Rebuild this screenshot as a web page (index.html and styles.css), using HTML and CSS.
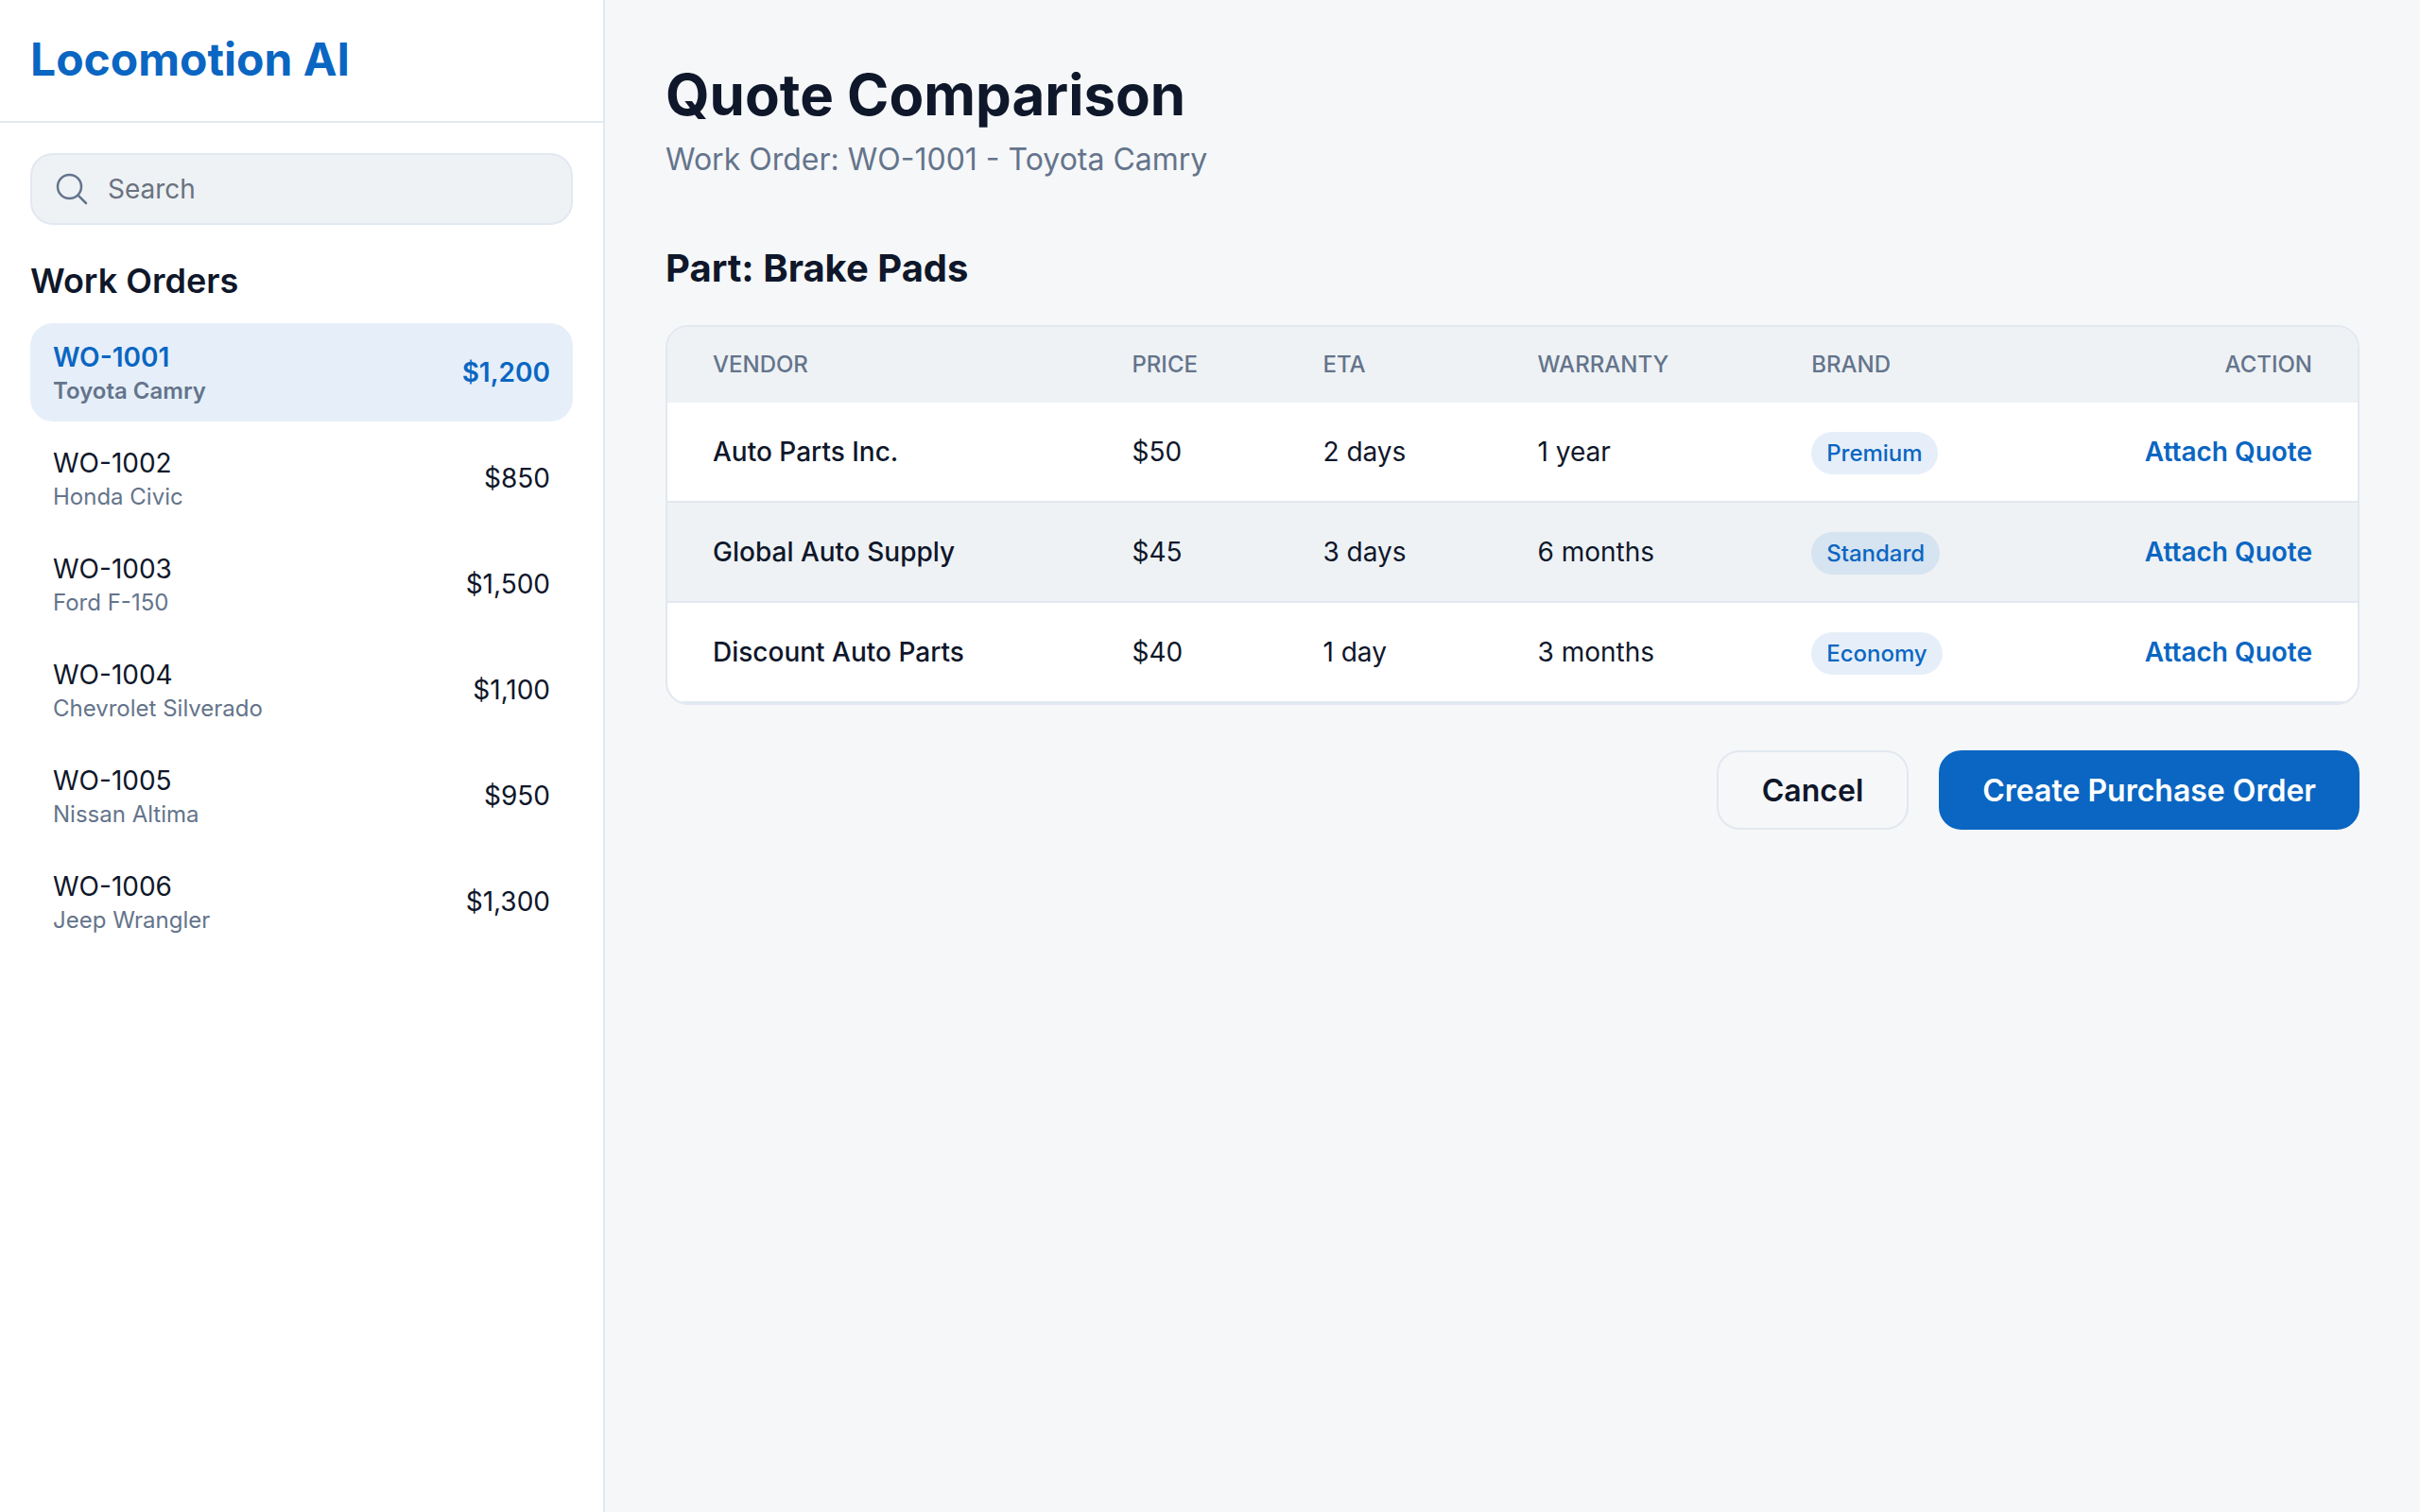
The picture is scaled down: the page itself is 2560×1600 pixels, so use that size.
FILE: index.html
```html
<!DOCTYPE html>
<html lang="en">
<head>
<meta charset="utf-8">
<meta name="viewport" content="width=device-width, initial-scale=1">
<title>Locomotion AI - Quote Comparison</title>
<link rel="stylesheet" href="styles.css">
</head>
<body>
<div class="app">
  <aside class="sidebar">
    <header class="brand"><span class="brand-name">Locomotion AI</span></header>
    <div class="sidebar-body">
      <label class="search">
        <svg class="search-icon" viewBox="0 0 24 24" fill="none" stroke="currentColor" stroke-width="1.5" stroke-linecap="round" stroke-linejoin="round" aria-hidden="true"><path d="M21 21l-5.197-5.197m0 0A7.5 7.5 0 1 0 5.196 5.196a7.5 7.5 0 0 0 10.607 10.607Z"/></svg>
        <input class="search-input" type="search" placeholder="Search" aria-label="Search">
      </label>
      <h2 class="list-title">Work Orders</h2>
      <nav class="orders" aria-label="Work Orders">
        <a class="order order-active" href="#wo-1001" aria-current="page"><span class="order-info"><span class="order-id">WO-1001</span><span class="order-car">Toyota Camry</span></span><span class="order-total">$1,200</span></a>
        <a class="order" href="#wo-1002"><span class="order-info"><span class="order-id">WO-1002</span><span class="order-car">Honda Civic</span></span><span class="order-total">$850</span></a>
        <a class="order" href="#wo-1003"><span class="order-info"><span class="order-id">WO-1003</span><span class="order-car">Ford F-150</span></span><span class="order-total">$1,500</span></a>
        <a class="order" href="#wo-1004"><span class="order-info"><span class="order-id">WO-1004</span><span class="order-car">Chevrolet Silverado</span></span><span class="order-total">$1,100</span></a>
        <a class="order" href="#wo-1005"><span class="order-info"><span class="order-id">WO-1005</span><span class="order-car">Nissan Altima</span></span><span class="order-total">$950</span></a>
        <a class="order" href="#wo-1006"><span class="order-info"><span class="order-id">WO-1006</span><span class="order-car">Jeep Wrangler</span></span><span class="order-total">$1,300</span></a>
      </nav>
    </div>
  </aside>
  <main class="main">
    <header class="page-header">
      <h1 class="page-title">Quote Comparison</h1>
      <p class="page-subtitle">Work Order: WO-1001 - Toyota Camry</p>
    </header>
    <section class="quotes">
      <h2 class="part-title">Part: Brake Pads</h2>
      <div class="table-card">
        <table class="quote-table">
          <colgroup><col class="col-vendor"><col class="col-price"><col class="col-eta"><col class="col-warranty"><col><col></colgroup>
          <thead>
            <tr><th scope="col">VENDOR</th><th scope="col">PRICE</th><th scope="col">ETA</th><th scope="col">WARRANTY</th><th scope="col">BRAND</th><th scope="col" class="action">ACTION</th></tr>
          </thead>
          <tbody>
            <tr><td class="vendor">Auto Parts Inc.</td><td>$50</td><td>2 days</td><td>1 year</td><td><span class="badge">Premium</span></td><td class="action"><button class="attach" type="button">Attach Quote</button></td></tr>
            <tr><td class="vendor">Global Auto Supply</td><td>$45</td><td>3 days</td><td>6 months</td><td><span class="badge">Standard</span></td><td class="action"><button class="attach" type="button">Attach Quote</button></td></tr>
            <tr><td class="vendor">Discount Auto Parts</td><td>$40</td><td>1 day</td><td>3 months</td><td><span class="badge">Economy</span></td><td class="action"><button class="attach" type="button">Attach Quote</button></td></tr>
          </tbody>
        </table>
      </div>
      <div class="actions">
        <button class="button button-secondary" type="button">Cancel</button>
        <button class="button button-primary" type="button">Create Purchase Order</button>
      </div>
    </section>
  </main>
</div>
</body>
</html>
```

FILE: styles.css
```css
:root {
  --primary: #0a66c2;
  --primary-soft: rgba(10, 102, 194, 0.1);
  --page: #f6f7f9;
  --surface: #ffffff;
  --surface-muted: #eef2f5;
  --border: #e2e8f0;
  --text: #0f172a;
  --text-muted: #64748b;
}

*, *::before, *::after {
  box-sizing: border-box;
}

body {
  margin: 0;
  background: var(--page);
  color: var(--text);
  font-family: Inter, "Liberation Sans", sans-serif;
  font-size: 28px;
  line-height: 40px;
}

h1, h2, p {
  margin: 0;
}

button, input {
  font: inherit;
  color: inherit;
}

.app {
  display: flex;
  min-height: 100vh;
}

/* Sidebar */
.sidebar {
  flex: 0 0 25%;
  background: var(--surface);
  border-right: 2px solid var(--border);
}

.brand {
  padding: 31px 32px 33px;
  border-bottom: 2px solid var(--border);
}

.brand-name {
  display: block;
  color: var(--primary);
  font-size: 48px;
  font-weight: 700;
  line-height: 64px;
}

.sidebar-body {
  padding: 32px;
}

.search {
  display: flex;
  align-items: center;
  gap: 18px;
  padding: 16px 22px;
  background: var(--surface-muted);
  border: 2px solid var(--border);
  border-radius: 24px;
}

.search-icon {
  flex: none;
  width: 40px;
  height: 40px;
  color: var(--text-muted);
}

.search-input {
  flex: 1;
  min-width: 0;
  height: 40px;
  padding: 0;
  border: 0;
  outline: 0;
  background: transparent;
  appearance: none;
}

.search-input::placeholder {
  color: #6b7280;
}

.list-title {
  margin: 31px 0 17px;
  font-size: 36px;
  font-weight: 600;
  line-height: 56px;
}

.orders {
  display: grid;
  gap: 8px;
}

.order {
  display: flex;
  align-items: center;
  justify-content: space-between;
  padding: 16px 24px;
  border-radius: 24px;
  color: inherit;
  text-decoration: none;
}

.order-info {
  display: grid;
}

.order-car {
  color: var(--text-muted);
  font-size: 24px;
  line-height: 32px;
}

.order-active {
  background: var(--primary-soft);
  color: var(--primary);
  font-weight: 600;
}

/* Main column */
.main {
  flex: 1;
  min-width: 0;
  padding: 64px;
}

.page-header {
  display: grid;
  gap: 9px;
  margin-bottom: 63px;
}

.page-title {
  font-size: 60px;
  font-weight: 700;
  line-height: 72px;
}

.page-subtitle {
  color: var(--text-muted);
  font-size: 32px;
  line-height: 48px;
}

.part-title {
  margin-bottom: 32px;
  font-size: 40px;
  font-weight: 700;
  line-height: 56px;
}

.table-card {
  overflow: hidden;
  background: var(--surface);
  border: 2px solid var(--border);
  border-radius: 24px;
}

.quote-table {
  width: 100%;
  border-collapse: separate;
  border-spacing: 0;
}

.col-vendor {
  width: 24.8%;
}

.col-price {
  width: 11.3%;
}

.col-eta {
  width: 12.7%;
}

.col-warranty {
  width: 16.2%;
}

.quote-table th {
  padding: 24px 48px;
  background: var(--surface-muted);
  color: var(--text-muted);
  font-size: 24px;
  font-weight: 500;
  line-height: 32px;
  text-align: left;
}

.quote-table td {
  padding: 32px 48px;
  border-bottom: 2px solid var(--border);
  white-space: nowrap;
}

.quote-table tbody tr:nth-child(even) {
  background: var(--surface-muted);
}

.quote-table .vendor {
  font-weight: 500;
}

.quote-table .action {
  text-align: right;
}

.badge {
  padding: 8px 16px;
  border-radius: 24px;
  background: var(--primary-soft);
  color: var(--primary);
  font-size: 24px;
  font-weight: 500;
  line-height: 32px;
}

.attach {
  display: inline-block;
  padding: 0;
  border: 0;
  background: none;
  color: var(--primary);
  font-weight: 600;
  vertical-align: top;
  cursor: pointer;
}

.actions {
  display: flex;
  justify-content: flex-end;
  gap: 32px;
  margin-top: 48px;
}

.button {
  padding: 17px 46px 15px;
  border: 2px solid transparent;
  border-radius: 24px;
  font-size: 32px;
  font-weight: 600;
  line-height: 48px;
  cursor: pointer;
}

.button-secondary {
  border-color: var(--border);
  background: transparent;
}

.button-primary {
  padding-inline: 44px;
  background: var(--primary);
  border-color: var(--primary);
  color: var(--surface);
}
```
